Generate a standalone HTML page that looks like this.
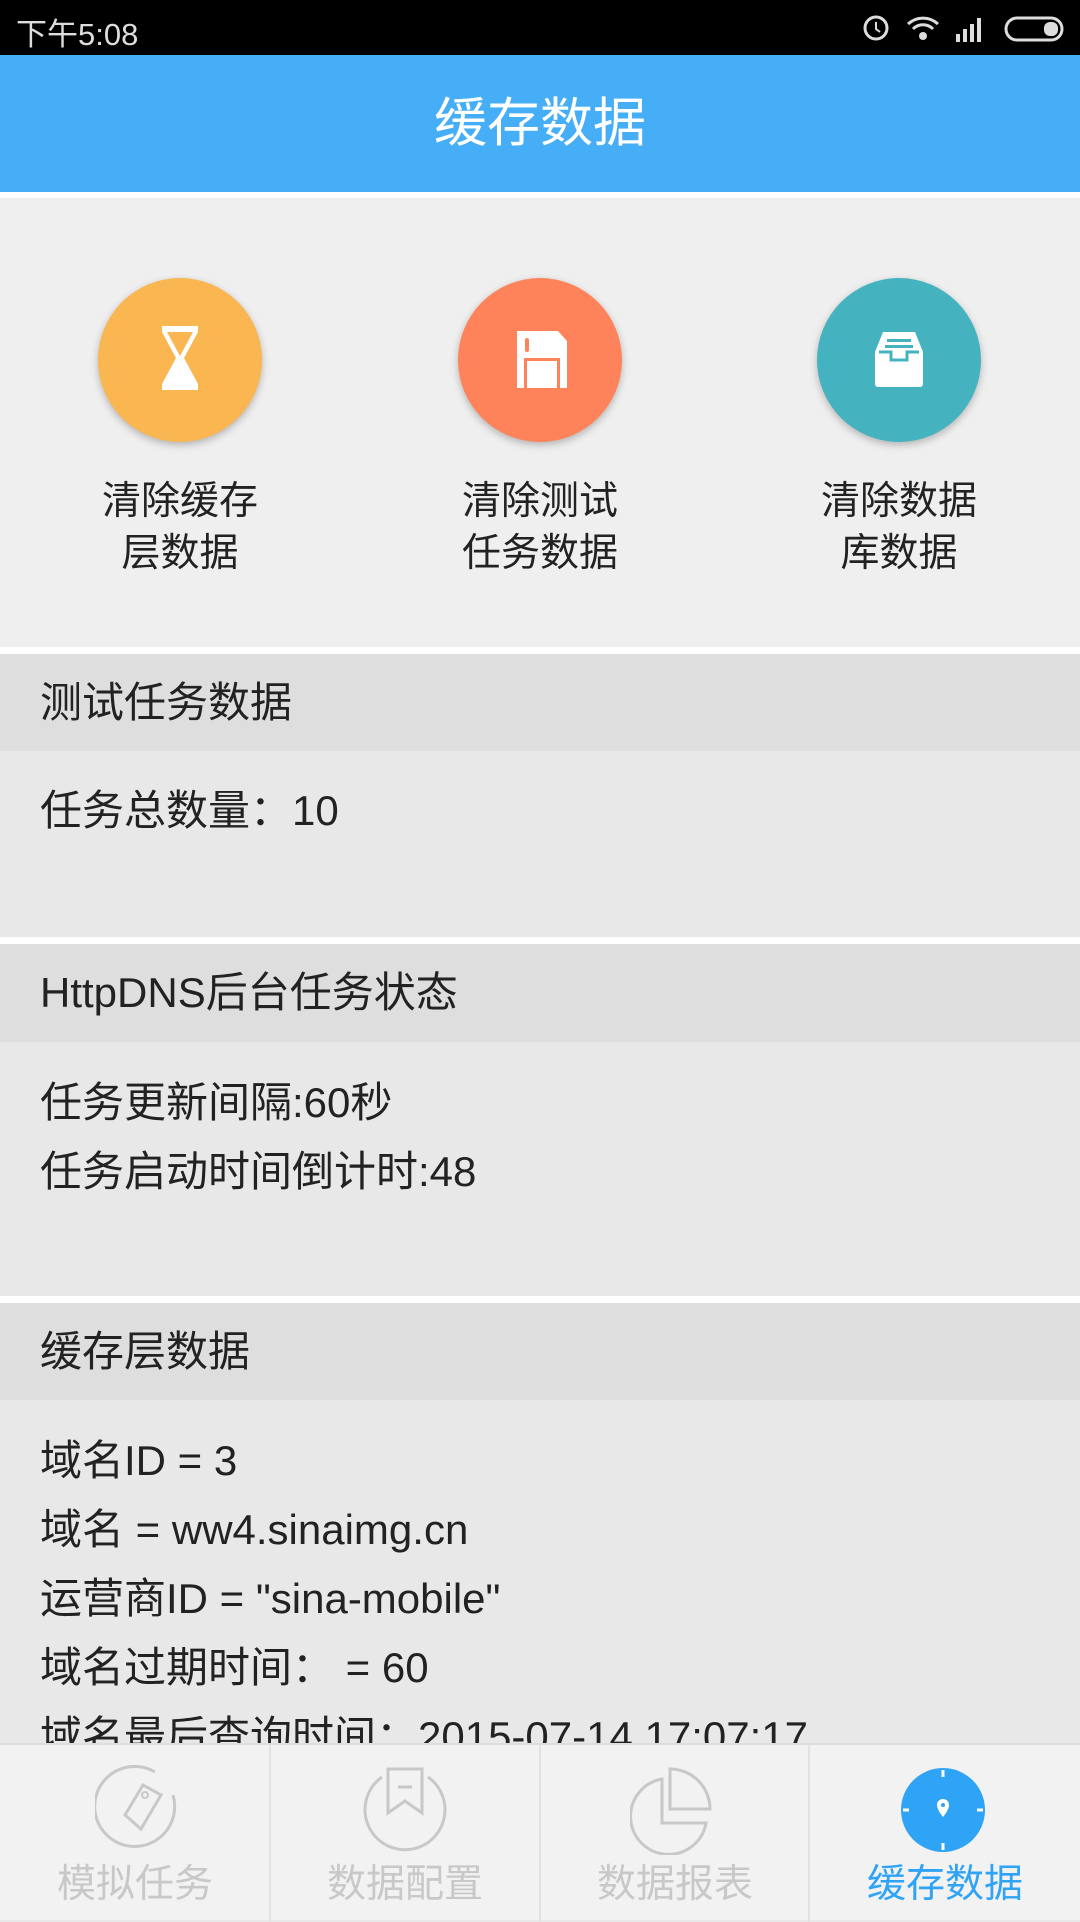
<!DOCTYPE html>
<html><head><meta charset="utf-8"><style>
*{margin:0;padding:0;box-sizing:border-box}
body{width:1080px;height:1920px;overflow:hidden;background:#e8e8e8;font-family:"Liberation Sans","Noto Sans CJK SC",sans-serif;position:relative}
.abs{position:absolute}
.sb{left:0;top:0;width:1080px;height:55px;background:#000;color:#ddd;font-size:31px}
.hd{left:0;top:55px;width:1080px;height:137px;background:#46aef7;color:#fff;font-size:53px;text-align:center;line-height:137px}
.top{left:0;top:198px;width:1080px;height:449px;background:#efefef}
.c{width:164px;height:164px;border-radius:50%;top:80px;box-shadow:0 3px 8px rgba(0,0,0,.25)}
.lb{top:278px;width:300px;text-align:center;font-size:39px;line-height:52px;color:#222}
.sh{left:0;width:1080px;background:#dedede;font-size:42px;color:#222;padding-left:40px}
.ct{left:0;width:1080px;background:#e8e8e8;font-size:42px;color:#222;padding-left:40px}
.w{left:0;width:1080px;height:7px;background:#fff}
.tab{left:0;top:1743px;width:1080px;height:177px;background:#f2f2f2;border-top:2px solid #ddd}
.tl{top:108px;width:270px;text-align:center;font-size:39px;color:#c8c8c8}
.dv{top:0;width:2px;height:177px;background:#e2e2e2}
</style></head><body>
<div class="abs sb"><span class="abs" style="left:16px;top:9px">下午5:08</span>
<svg class="abs" style="left:860px;top:10px" width="210" height="34"><circle cx="16" cy="18" r="11" fill="none" stroke="#ddd" stroke-width="3"/><path d="M16 12v7l4 3" stroke="#ddd" stroke-width="2" fill="none"/><path d="M48 14a22 22 0 0 1 30 0M53 19a14 14 0 0 1 20 0" stroke="#ddd" stroke-width="3" fill="none"/><circle cx="63" cy="26" r="4" fill="#ddd"/><rect x="96" y="24" width="4" height="8" fill="#ddd"/><rect x="103" y="19" width="4" height="13" fill="#ddd"/><rect x="110" y="14" width="4" height="18" fill="#ddd"/><rect x="117" y="8" width="4" height="24" fill="#ddd"/><rect x="146" y="8" width="56" height="22" rx="11" fill="none" stroke="#ddd" stroke-width="3"/><rect x="184" y="12" width="14" height="14" rx="6" fill="#ddd"/></svg></div>
<div class="abs hd">缓存数据</div>
<div class="abs w" style="top:192px;height:6px"></div>
<div class="abs top">
<div class="abs c" style="left:98px;background:#f9b651"><svg width="164" height="164"><path d="M64 48h36v6l-14 26 14 26v6H64v-6l14-26-14-26z" fill="#fff"/><path d="M69 54h26l-13 24z" fill="#f9b651"/><path d="M70 106l12-22 12 22z" fill="#fff"/></svg></div>
<div class="abs c" style="left:458px;background:#ff835a"><svg width="164" height="164"><path d="M59 53h41l9 10v47H59z" fill="#fff"/><rect x="67" y="60" width="4" height="14" rx="2" fill="#ff835a"/><rect x="66" y="80" width="36" height="30" fill="#ff835a"/><rect x="69" y="83" width="30" height="27" fill="#fff"/></svg></div>
<div class="abs c" style="left:817px;background:#45b3bf"><svg width="164" height="164"><path d="M58 74l8-20h32l8 20v32a3 3 0 0 1-3 3H61a3 3 0 0 1-3-3z" fill="#fff"/><path d="M62 74h12v8h16v-8h12" stroke="#45b3bf" stroke-width="3" fill="none"/><rect x="70" y="61" width="24" height="3" fill="#45b3bf"/><rect x="68" y="67" width="28" height="3" fill="#45b3bf"/></svg></div>
<div class="abs lb" style="left:30px">清除缓存<br>层数据</div>
<div class="abs lb" style="left:390px">清除测试<br>任务数据</div>
<div class="abs lb" style="left:749px">清除数据<br>库数据</div>
</div>
<div class="abs w" style="top:647px"></div>
<div class="abs sh" style="top:654px;height:97px;line-height:97px">测试任务数据</div>
<div class="abs ct" style="top:751px;height:186px;padding-top:27px;line-height:66px">任务总数量：10</div>
<div class="abs w" style="top:937px"></div>
<div class="abs sh" style="top:944px;height:98px;line-height:98px">HttpDNS后台任务状态</div>
<div class="abs ct" style="top:1042px;height:254px;padding-top:26px;line-height:69px">任务更新间隔:60秒<br>任务启动时间倒计时:48</div>
<div class="abs w" style="top:1296px"></div>
<div class="abs sh" style="top:1303px;height:97px;line-height:97px">缓存层数据</div>
<div class="abs ct" style="top:1400px;height:343px;padding-top:26px;line-height:69px">域名ID = 3<br>域名 = ww4.sinaimg.cn<br>运营商ID = "sina-mobile"<br>域名过期时间： = 60<br>域名最后查询时间：2015-07-14 17:07:17</div>
<div class="abs tab">
<div class="abs dv" style="left:269px"></div><div class="abs dv" style="left:539px"></div><div class="abs dv" style="left:808px"></div>
<svg class="abs" style="left:95px;top:20px" width="90" height="90"><path d="M60 7A40 40 0 1 0 78 30" fill="none" stroke="#c8c8c8" stroke-width="3"/><path d="M30 50l18-30 18 10-20 34z" fill="none" stroke="#c8c8c8" stroke-width="3"/><circle cx="50" cy="30" r="3" fill="none" stroke="#c8c8c8" stroke-width="2"/></svg>
<svg class="abs" style="left:360px;top:20px" width="90" height="90"><path d="M22 12A40 40 0 1 0 68 12" fill="none" stroke="#c8c8c8" stroke-width="3"/><path d="M28 4h34v44l-17-12-17 12z" fill="none" stroke="#c8c8c8" stroke-width="3"/><path d="M38 22h14" stroke="#c8c8c8" stroke-width="3"/></svg>
<svg class="abs" style="left:630px;top:20px" width="90" height="90"><path d="M32 14A38 38 0 1 0 76 58H32z" fill="none" stroke="#c8c8c8" stroke-width="3"/><path d="M40 4a40 40 0 0 1 40 40H40z" fill="none" stroke="#c8c8c8" stroke-width="3"/></svg>
<svg class="abs" style="left:898px;top:20px" width="90" height="90"><circle cx="45" cy="45" r="42" fill="#2fa3f5"/><g stroke="#fff" stroke-width="3"><path d="M45 5v7M45 78v7M5 45h6M79 45h6"/></g><path d="M45 34a6 6 0 0 1 6 6c0 5-6 12-6 12s-6-7-6-12a6 6 0 0 1 6-6z" fill="#fff"/><circle cx="45" cy="40" r="2" fill="#2fa3f5"/></svg>
<div class="abs tl" style="left:0">模拟任务</div>
<div class="abs tl" style="left:270px">数据配置</div>
<div class="abs tl" style="left:540px">数据报表</div>
<div class="abs tl" style="left:810px;color:#2fa3f5">缓存数据</div>
</div>
</body></html>
